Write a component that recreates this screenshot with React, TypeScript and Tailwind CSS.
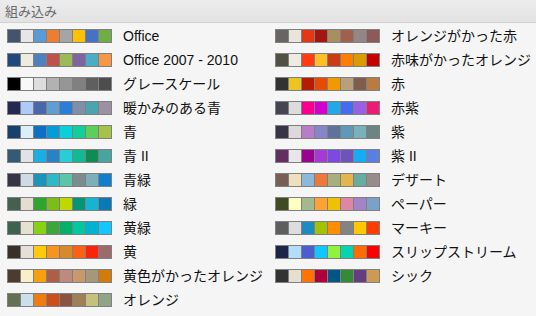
type Theme = { name: string; colors: string[] };

const leftThemes: Theme[] = [
  { name: 'Office', colors: ['#44546a', '#e7e6e6', '#5b9bd5', '#ed7d31', '#a5a5a5', '#ffc000', '#4472c4', '#70ad47'] },
  { name: 'Office 2007 - 2010', colors: ['#1f497d', '#eeece1', '#4f81bd', '#c0504d', '#9bbb59', '#8064a2', '#4bacc6', '#f79646'] },
  { name: 'グレースケール', colors: ['#000000', '#f8f8f8', '#dddddd', '#b2b2b2', '#969696', '#808080', '#5f5f5f', '#4d4d4d'] },
  { name: '暖かみのある青', colors: ['#242852', '#accbf9', '#4a66ac', '#629dd1', '#297fd5', '#7f8fa9', '#4aa5ae', '#9d90a0'] },
  { name: '青', colors: ['#17406d', '#dbeff9', '#0f6fc6', '#009dd9', '#0bd0d9', '#10cf9b', '#5ccf5a', '#a5c249'] },
  { name: '青 II', colors: ['#335b74', '#dfe3e5', '#1cade4', '#2683c6', '#27ced7', '#12b995', '#0e8c54', '#46a59f'] },
  { name: '青緑', colors: ['#373545', '#cedbe6', '#1d95b8', '#2dbac6', '#5cc4a8', '#7a8c8e', '#7bb0ba', '#0f80d0'] },
  { name: '緑', colors: ['#455f51', '#e3ded1', '#2ea62e', '#7dbd18', '#c0d700', '#029676', '#14b5d0', '#0a79b8'] },
  { name: '黄緑', colors: ['#3e6150', '#e6e0d0', '#88d216', '#3da63a', '#00b06b', '#00c8a3', '#00b3d4', '#12c7ff'] },
  { name: '黄', colors: ['#39302a', '#e5deda', '#ffca08', '#f8931d', '#d68a2e', '#fc6010', '#f8250a', '#9c6a6a'] },
  { name: '黄色がかったオレンジ', colors: ['#4e3b30', '#fbeec9', '#f6a00e', '#ad5e47', '#be8a80', '#c9996d', '#a5987a', '#d27a0a'] },
  { name: 'オレンジ', colors: ['#637052', '#ccdeec', '#ee7d10', '#cc4e1a', '#8a5440', '#9e8054', '#c6c07e', '#90a488'] },
];

const rightThemes: Theme[] = [
  { name: 'オレンジがかった赤', colors: ['#696464', '#e9e5dc', '#e23815', '#a31712', '#a88f60', '#a1604e', '#928686', '#8d5a5a'] },
  { name: '赤味がかったオレンジ', colors: ['#505046', '#eeece1', '#ff3a14', '#ffbd26', '#c83d14', '#ff7d00', '#d89c00', '#c40000'] },
  { name: '赤', colors: ['#323232', '#eec41f', '#b41c04', '#e64a04', '#f29800', '#b8a07c', '#7f5c4d', '#b97b3e'] },
  { name: '赤紫', colors: ['#454551', '#dcdcdc', '#f7008f', '#d400cf', '#23a8e6', '#466cee', '#9a5fe2', '#ea1d73'] },
  { name: '紫', colors: ['#373545', '#dcd8dc', '#b77ec7', '#8784c7', '#5d739a', '#5f99b6', '#7ab1b9', '#6b8484'] },
  { name: '紫 II', colors: ['#632e62', '#eae5eb', '#9a0290', '#a53ad4', '#7c4ae0', '#6c54bc', '#16abf3', '#5a7fe0'] },
  { name: 'デザート', colors: ['#775f55', '#f0dfbd', '#8cb8da', '#ec7839', '#a5b07e', '#e4b54f', '#6aab9f', '#968c8c'] },
  { name: 'ペーパー', colors: ['#3f4c22', '#ffffc4', '#a3b88e', '#ffa236', '#efc100', '#dd87a4', '#a484c6', '#7aa2c8'] },
  { name: 'マーキー', colors: ['#5e5e5e', '#dddddd', '#1b8bc0', '#a3c100', '#ff8d00', '#838383', '#ffc700', '#ff3d00'] },
  { name: 'スリップストリーム', colors: ['#1c2448', '#b0dffd', '#4c5dcc', '#10c6ff', '#8ef23e', '#04d5b0', '#ff6c00', '#ff0000'] },
  { name: 'シック', colors: ['#333333', '#e6dfcf', '#ff7400', '#b0003a', '#005783', '#358a3a', '#663e7f', '#cc9a55'] },
];

function Swatch({ colors }: { colors: string[] }) {
  return (
    <div className="flex gap-px bg-[#808080] p-px shrink-0">
      {colors.map((c, i) => (
        <div key={i} className="w-3 h-3" style={{ backgroundColor: c }} />
      ))}
    </div>
  );
}

function ThemeRow({ theme }: { theme: Theme }) {
  return (
    <div className="flex items-center h-6">
      <Swatch colors={theme.colors} />
      <span className="ml-[11px] text-[14px] leading-none text-[#111] whitespace-nowrap">{theme.name}</span>
    </div>
  );
}

export default function App() {
  return (
    <div
      className="w-[536px] h-[316px] bg-[#f5f5f5] overflow-hidden"
      style={{ fontFamily: '"Liberation Sans", "Noto Sans CJK JP", sans-serif' }}
    >
      <div className="h-[23px] bg-gradient-to-b from-[#ececec] to-[#e3e3e3] border-b border-[#d2d2d2] flex items-center pl-[5px]">
        <span className="text-[13px] leading-none text-[#6a6a6a]">組み込み</span>
      </div>
      <div className="grid grid-cols-[268px_261px] pl-[7px] pt-px">
        <div className="flex flex-col">
          {leftThemes.map((t) => (
            <ThemeRow key={t.name} theme={t} />
          ))}
        </div>
        <div className="flex flex-col">
          {rightThemes.map((t) => (
            <ThemeRow key={t.name} theme={t} />
          ))}
        </div>
      </div>
    </div>
  );
}
